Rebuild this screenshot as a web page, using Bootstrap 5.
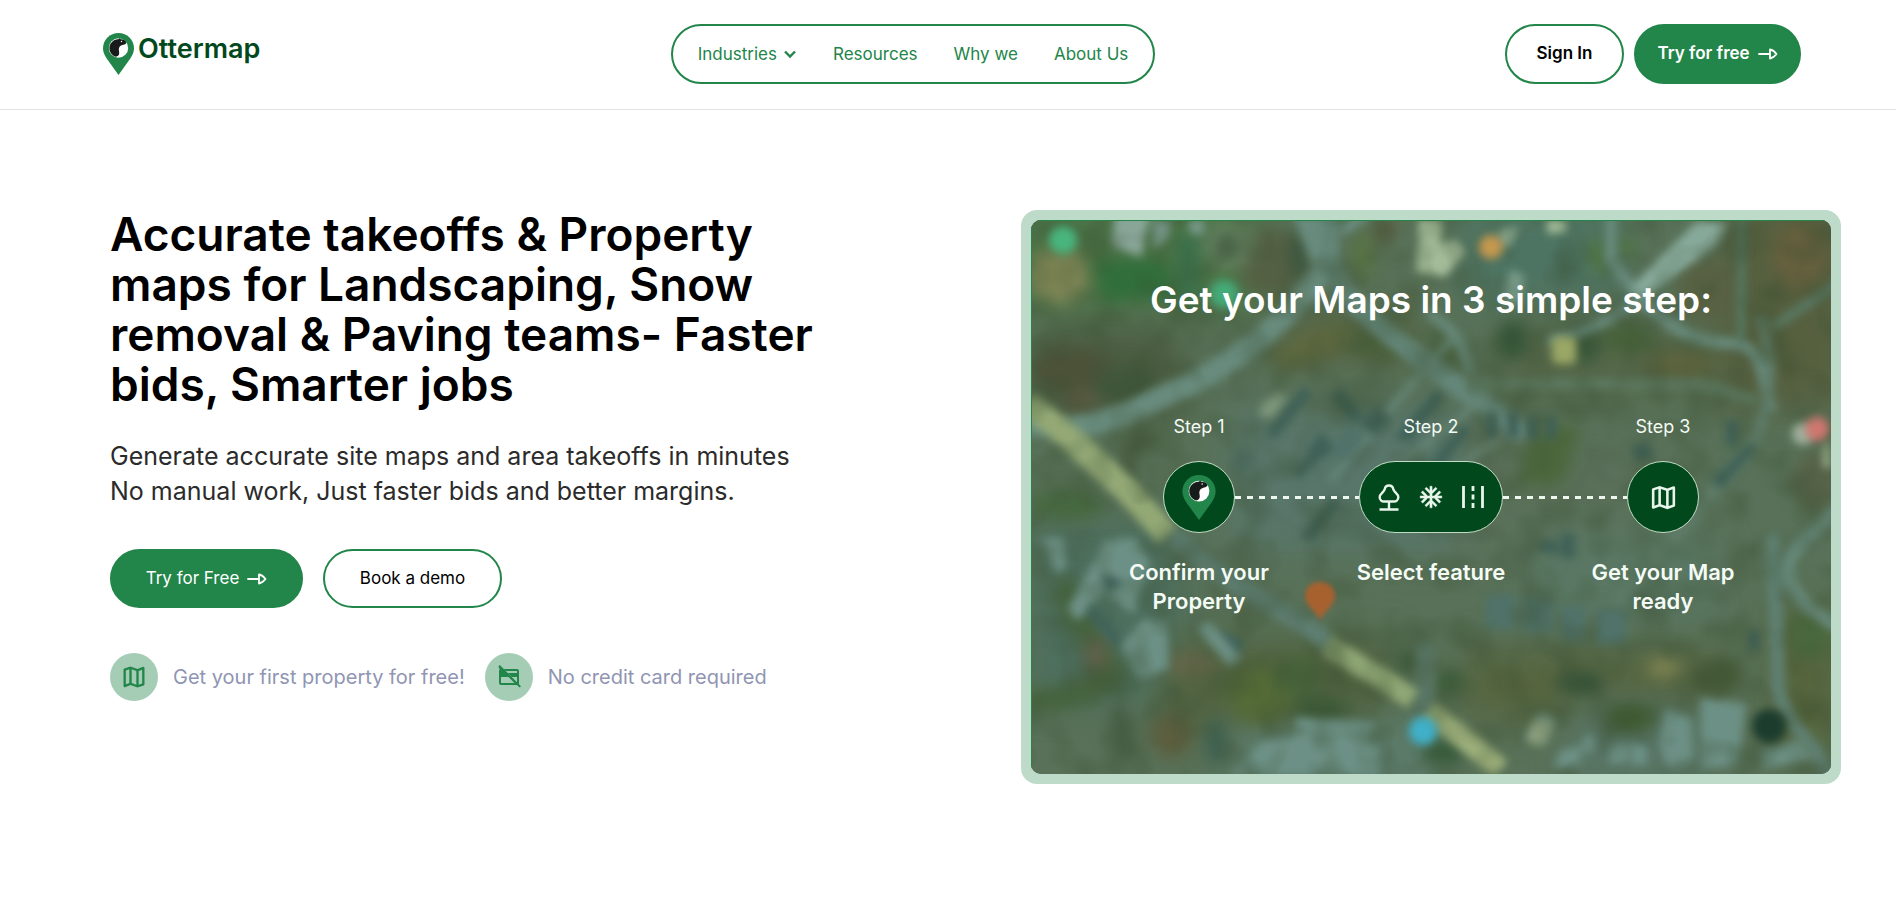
<!DOCTYPE html>
<html lang="en">
<head>
<meta charset="utf-8">
<meta name="viewport" content="width=device-width, initial-scale=1">
<title>Ottermap</title>
<link href="https://cdn.jsdelivr.net/npm/bootstrap@5.3.0/dist/css/bootstrap.min.css" rel="stylesheet">
<style>
  :root { --green: #22854a; --forest: #02481d; --mint: #a5cdb6; }
  body { font-family: Inter, "Open Sans", sans-serif; font-size: 17px; line-height: 24px; color: #000; background: #fff; }
  .site-header { border-bottom: 1px solid #e3e3e3; padding: 24px 95px 25px 103px; }
  .brand { width: 218px; color: var(--forest); font-size: 27px; line-height: 32px; font-weight: 600; }
  .brand:hover { color: var(--forest); }
  .brand span { padding-bottom: 10px; }
  .menu-pill { height: 60px; border: 2px solid var(--green); border-radius: 30px; padding: 0 25px; gap: 36px; }
  .menu-pill a { color: var(--green); text-decoration: none; }
  .menu-pill a:first-child { gap: 6px; }
  .pill { height: 60px; border: 2px solid var(--green); border-radius: 30px; display: inline-flex; align-items: center; justify-content: center; gap: 8px; padding: 0 20px; font-size: 17px; white-space: nowrap; }
  .pill-fill, .pill-fill:hover { background: var(--green); color: #fff; }
  .pill-line, .pill-line:hover { background: #fff; color: #000; border-color: var(--green); }
  .w-sign { width: 119px; } .w-try { width: 167px; } .w-free { width: 193px; } .w-demo { width: 179px; }
  .actions { gap: 10px; }
  .hero-copy { padding: 99px 60px 60px 110px; }
  .hero-copy h1 { font-size: 46px; line-height: 50px; font-weight: 600; margin: 0 0 30px; max-width: 740px; }
  .hero-copy .intro { font-size: 25px; line-height: 35px; color: #2b2b2b; margin: 0 0 40px; }
  .hero-copy .pill { height: 59px; }
  .cta-row, .perk-row { gap: 20px; }
  .perk-row { margin-top: 45px; }
  .perk { font-size: 20px; color: #8f95b2; gap: 15px; }
  .perk-icon { width: 48px; height: 48px; border-radius: 50%; background: var(--mint); color: var(--green); flex: none; }
  .hero-visual { padding: 100px 55px 60px 73px; }
  .map-card { border: 10px solid #bedbca; border-radius: 16px; color: #f4fbf5; background: #bedbca; }
  .map-inner { border-radius: 10px; overflow: hidden; min-height: 554px; padding: 56px 52px; background: #566f55; }
  .map-bg { position: absolute; inset: 0; width: 100%; height: 100%; }
  .map-card h2 { font-size: 37px; line-height: 48px; font-weight: 600; margin: 0; color: #fff; }
  .steps-grid { display: grid; grid-template-columns: repeat(3, 232px); justify-content: center; text-align: center; }
  .step-no { font-size: 18px; line-height: 24px; margin-top: 91px; }
  .step-name { font-size: 22px; line-height: 29px; font-weight: 600; margin-top: 25px; }
  .step-name span { max-width: 160px; margin: 0 auto; }
  .flow { width: 536px; margin: 22px auto 0; }
  .node { height: 72px; min-width: 72px; border: 1px solid #c3dcc6; border-radius: 36px; background: var(--forest); color: #e8f5ea; flex: none; }
  .node-wide { width: 144px; gap: 18px; }
  .dash { height: 3px; flex: 1; background: repeating-linear-gradient(90deg, #edf7ef 0 6px, transparent 6px 12px); }
</style>
</head>
<body>
<svg width="0" height="0" class="position-absolute" aria-hidden="true">
  <symbol id="pin" viewBox="0 0 31 42">
    <path fill="#22854a" d="M15.500 0C6.900 0 0 6.800 0 15.200c0 3.700 1.500 7 3.700 10.400L15.500 42l11.800-16.400C29.500 22.200 31 18.900 31 15.200 31 6.800 24.100 0 15.500 0z"/>
    <circle cx="15.500" cy="15" r="9.700" fill="#fff"/>
    <path fill="#171b1a" d="M8.200 20.500C5.300 16.500 6 11 9.800 8.200c2-1.500 4-2.200 5.600-1.900l1-1 1.300.9c2.600.1 4.400.9 5.300 2.500.5 1.300-.2 2.500-1.700 2.700-2.500.3-4.600 1.400-5.300 3.500-.6 1.800.4 3.700.2 5.600-.2 1.700-1.500 3-3.300 3.200-1.800-.5-3.700-1.700-4.700-3.200z"/>
    <circle cx="18.500" cy="8.500" r=".7" fill="#fff"/>
  </symbol>
  <symbol id="arrow" viewBox="0 0 20 12">
    <path d="M1 6h10.500M12 1.500v9M12 1.500c3 .5 5 2.500 6.500 4.500-1.500 2-3.500 4-6.500 4.500" fill="none" stroke="currentColor" stroke-width="1.800" stroke-linecap="round" stroke-linejoin="round"/>
  </symbol>
  <symbol id="map" viewBox="0 0 24 24">
    <path fill="currentColor" fill-rule="evenodd" d="M15 21l-6-2.100-4.650 1.800q-.5.200-.925-.112T3 19.750v-14q0-.325.188-.575T3.700 4.800L9 3l6 2.100 4.650-1.800q.5-.2.925.112T21 4.250v14q0 .325-.188.575t-.512.375L15 21zm-1-2.450V6.850l-4-1.400v11.700l4 1.400zm2 0l3-1V5.700l-3 1.150v11.700zM5 18.300l3-1.150V5.450l-3 1V18.300z"/>
  </symbol>
  <symbol id="card-off" viewBox="0 0 24 24">
    <path fill="currentColor" d="M7 4H20c1.100 0 2 .9 2 2v12c0 .5-.2 1-.5 1.300L20 17.800V12h-5L11 8h9V6H9zM1.400 1.400L2.800 0 24 21.200l-1.400 1.400-2.700-2.700H4c-1.100 0-2-.9-2-2V6c0-.7.300-1.200.7-1.600zM4 12v6h13.500l-6-6z"/>
  </symbol>
</svg>

<header class="site-header d-flex justify-content-between align-items-center">
  <a href="#" class="brand d-flex align-items-center text-decoration-none">
    <svg width="31" height="42" class="me-1" aria-hidden="true"><use href="#pin"/></svg>
    <span>Ottermap</span>
  </a>
  <nav class="menu-pill d-flex align-items-center">
    <a href="#" class="d-flex align-items-center">Industries
      <svg width="14" height="10" viewBox="0 0 14 10" aria-hidden="true"><path d="M2 2.500l5 5 5-5" fill="none" stroke="currentColor" stroke-width="2.400"/></svg>
    </a>
    <a href="#">Resources</a>
    <a href="#">Why we</a>
    <a href="#">About Us</a>
  </nav>
  <div class="actions d-flex">
    <button type="button" class="btn pill pill-line w-sign fw-semibold">Sign In</button>
    <button type="button" class="btn pill pill-fill w-try fw-semibold">Try for free <svg width="20" height="12" aria-hidden="true"><use href="#arrow"/></svg></button>
  </div>
</header>

<main class="row g-0">
  <section class="col-12 col-lg-6 hero-copy">
    <h1>Accurate takeoffs &amp; Property maps for Landscaping, Snow removal &amp; Paving teams- Faster bids, Smarter jobs</h1>
    <p class="intro">Generate accurate site maps and area takeoffs in minutes<br>No manual work, Just faster bids and better margins.</p>
    <div class="cta-row d-flex">
      <button type="button" class="btn pill pill-fill w-free">Try for Free <svg width="20" height="12" aria-hidden="true"><use href="#arrow"/></svg></button>
      <button type="button" class="btn pill pill-line w-demo">Book a demo</button>
    </div>
    <div class="perk-row d-flex flex-wrap">
      <div class="perk d-flex align-items-center">
        <span class="perk-icon d-flex align-items-center justify-content-center"><svg width="28" height="28" aria-hidden="true"><use href="#map"/></svg></span>
        <span>Get your first property for free!</span>
      </div>
      <div class="perk d-flex align-items-center">
        <span class="perk-icon d-flex align-items-center justify-content-center"><svg width="24" height="24" aria-hidden="true"><use href="#card-off"/></svg></span>
        <span>No credit card required</span>
      </div>
    </div>
  </section>

  <section class="col-12 col-lg-6 hero-visual">
    <div class="map-card">
      <div class="map-inner position-relative">
        <svg class="map-bg" viewBox="0 0 800 554" preserveAspectRatio="none" aria-hidden="true">
          <defs>
            <filter id="b3" x="-5%" y="-5%" width="110%" height="110%" color-interpolation-filters="sRGB"><feGaussianBlur stdDeviation="4"/></filter>
            <filter id="b6" x="-5%" y="-5%" width="110%" height="110%" color-interpolation-filters="sRGB"><feGaussianBlur stdDeviation="8"/></filter>
            <filter id="b16" x="-10%" y="-10%" width="120%" height="120%" color-interpolation-filters="sRGB"><feGaussianBlur stdDeviation="18"/></filter>
            <filter id="grain" x="0" y="0" width="100%" height="100%" color-interpolation-filters="sRGB">
              <feTurbulence type="fractalNoise" baseFrequency="0.025" numOctaves="2" seed="8"/>
              <feColorMatrix values="0 0 0 0 .22  0 0 0 0 .3  0 0 0 0 .18  .9 0 0 0 -.36"/>
            </filter>
          </defs>
          <rect width="800" height="554" fill="#587158"/>
          <!-- broad ground tones -->
          <g filter="url(#b16)">
            <rect x="-20" y="-20" width="250" height="110" fill="#4c7548"/>
            <rect x="0" y="110" width="150" height="85" fill="#4b5c40"/>
            <rect x="240" y="90" width="150" height="50" fill="#566645"/>
            <rect x="430" y="-10" width="160" height="90" fill="#4d7463"/>
            <rect x="690" y="-20" width="130" height="210" fill="#56603f"/>
            <rect x="470" y="110" width="220" height="60" fill="#556748"/>
            <rect x="200" y="190" width="240" height="140" fill="#58766a"/>
            <rect x="430" y="210" width="190" height="120" fill="#5a7059"/>
            <rect x="500" y="310" width="180" height="90" fill="#597763"/>
            <rect x="0" y="300" width="150" height="180" fill="#4d6f5e"/>
            <rect x="130" y="420" width="230" height="100" fill="#526441"/>
            <rect x="430" y="430" width="260" height="70" fill="#56653f"/>
            <rect x="200" y="500" width="200" height="70" fill="#5c7c6c"/>
            <rect x="540" y="480" width="140" height="80" fill="#587566"/>
            <rect x="740" y="390" width="70" height="140" fill="#56653c"/>
          </g>
          <!-- woods, fields and clearings -->
          <g filter="url(#b6)">
            <path fill="#306e3b" d="M60 40h75l8 35-70 8z"/>
            <ellipse cx="28" cy="55" rx="31" ry="29" fill="#7d8454"/>
            <ellipse cx="240" cy="42" rx="34" ry="34" fill="#546043"/>
            <ellipse cx="268" cy="35" rx="10" ry="24" fill="#3c563f"/>
            <ellipse cx="198" cy="25" rx="26" ry="24" fill="#64805f"/>
            <ellipse cx="196" cy="26" rx="11" ry="10" fill="#3e5b40"/>
            <rect x="146" y="15" width="22" height="70" fill="#39704a"/>
            <ellipse cx="40" cy="150" rx="42" ry="22" fill="#4b5238"/>
            <ellipse cx="95" cy="165" rx="32" ry="20" fill="#41583c"/>
            <ellipse cx="50" cy="182" rx="16" ry="12" fill="#5c5a42"/>
            <path fill="#5f693f" d="M235 135l60-30 30 5-20 25-50 15z"/>
            <ellipse cx="350" cy="125" rx="38" ry="15" fill="#4b613c"/>
            <ellipse cx="332" cy="35" rx="12" ry="26" fill="#587244"/>
            <path fill="#5b5b3d" d="M345 0h25l-20 30z"/>
            <ellipse cx="481" cy="120" rx="15" ry="20" fill="#345538"/>
            <ellipse cx="555" cy="125" rx="14" ry="20" fill="#39583a"/>
            <ellipse cx="597" cy="118" rx="26" ry="15" fill="#466139"/>
            <path fill="#50743f" d="M555 20l18 0 5 30-16 5zM580 20h28l-10 22z"/>
            <ellipse cx="680" cy="70" rx="35" ry="32" fill="#586143"/>
            <ellipse cx="770" cy="35" rx="28" ry="34" fill="#67603e"/>
            <ellipse cx="650" cy="145" rx="34" ry="15" fill="#60653f"/>
            <path fill="#48623d" d="M395 110l30 12 12 28-30-10z"/>
            <path fill="none" d="M118 210c-24 20-32 55-4 80" stroke="#45583c" stroke-width="16"/>
            <ellipse cx="35" cy="285" rx="38" ry="16" fill="#46683f"/>
            <path d="M40 360c-15 25 20 55 42 90-10 20-50 35-90 30" fill="none" stroke="#47653f" stroke-width="24"/>
            <ellipse cx="65" cy="435" rx="12" ry="18" fill="#64624a"/>
            <ellipse cx="160" cy="445" rx="24" ry="12" fill="#66674a"/>
            <ellipse cx="230" cy="475" rx="32" ry="30" fill="#546b37"/>
            <ellipse cx="268" cy="456" rx="24" ry="20" fill="#46623a"/>
            <ellipse cx="290" cy="490" rx="28" ry="14" fill="#3c5a37"/>
            <ellipse cx="140" cy="515" rx="20" ry="22" fill="#5f5f3f"/>
            <ellipse cx="88" cy="515" rx="11" ry="32" fill="#476147"/>
            <ellipse cx="185" cy="522" rx="10" ry="24" fill="#3d6153"/>
            <ellipse cx="378" cy="442" rx="14" ry="14" fill="#3d5a3a"/>
            <ellipse cx="417" cy="462" rx="14" ry="13" fill="#395a36"/>
            <ellipse cx="550" cy="463" rx="25" ry="12" fill="#355238"/>
            <ellipse cx="690" cy="455" rx="24" ry="16" fill="#455b38"/>
            <ellipse cx="600" cy="498" rx="26" ry="14" fill="#3f5d31"/>
            <ellipse cx="632" cy="448" rx="16" ry="9" fill="#828651"/>
            <ellipse cx="412" cy="532" rx="20" ry="13" fill="#375d3c"/>
            <ellipse cx="780" cy="415" rx="20" ry="24" fill="#4a6a3e"/>
            <ellipse cx="785" cy="260" rx="22" ry="30" fill="#576348"/>
            <path fill="#4c673c" d="M500 205h50l-18 60-46 0z"/>
          </g>
          <!-- roads and water -->
          <g filter="url(#b3)" fill="none" stroke="#688b7d" stroke-linecap="round">
            <path d="M0 205c60 8 90-8 130-28C200 150 250 105 290 55c10-15-10-30-18-70" stroke-width="22"/>
            <path d="M298 0v45c20 45 75 80 120 115 30 25 50 30 70 50" stroke-width="20" stroke="#64877a"/>
            <path d="M315 8L345-15" stroke-width="12"/>
            <path d="M400 95c25 15 30 25 38 52" stroke-width="9"/>
            <path d="M580 0v40l35 45c30 25 40 35 80 38 40 0 35 35 45 65" stroke-width="11"/>
            <path d="M520 120c40-10 60-20 90-42l45-50" stroke-width="9"/>
            <path d="M710 0v120" stroke-width="9" stroke="#54765f"/>
            <path d="M745 105l60-40" stroke-width="9" stroke="#597964"/>
            <path d="M440 165h230l50 15" stroke-width="12" stroke="#5b785f"/>
            <path d="M730 100c20 60 5 110-25 145l-120 140" stroke-width="11" stroke="#5f7c69"/>
            <path d="M800 295c-40 40-50 40-40 70 15 25 30 30 45 40" stroke-width="13"/>
            <path d="M742 320l5 150c10 40 40 55 50 85" stroke-width="14" stroke="#5f8072"/>
            <path d="M140 315c60 55 120 75 160 110" stroke-width="18" stroke="#5e7e72"/>
            <path d="M394 430v75" stroke-width="18" stroke="#587564"/>
            <path d="M300 260l45-55 75-85" stroke-width="5"/>
            <path d="M340 265l120-90M375 285l90-65" stroke-width="5" stroke="#6a8b7b"/>
            <g stroke-linecap="butt">
              <path d="M-5 183c35 25 60 50 98 85l44 47" stroke="#93a875" stroke-width="25"/>
              <path d="M296 425l86 54" stroke="#8fa775" stroke-width="21"/>
              <path d="M398 491l72 58" stroke="#9caf7a" stroke-width="21"/>
            </g>
          </g>
          <!-- buildings and parked vehicles -->
          <g filter="url(#b3)">
            <path fill="#88a598" d="M85-8h35l-10 45-30-12z"/>
            <path fill="#79998d" d="M122 0h18l-4 20-14 8zM158 0h15v14h-14z"/>
            <path fill="#a3bb98" d="M388 0h24l-4 30h-20zM386 30l38-10 10 12-20 25-28-5zM515 0h20v12l-18 2z"/>
            <path fill="#86a48c" d="M470 8h18l-8 18h-14z"/>
            <path fill="#87a99a" d="M665 2h34l-12 22-74 52-14-8z"/>
            <path fill="#7b9e8d" d="M478 50l16 6-6 28-16-4z"/>
            <path fill="#7b9579" d="M230 185l18-14 8 8-14 20-14-2z"/>
            <g fill="#3f6157">
              <path d="M235 212l38-46 8 8-38 46zM262 252l18-20 6 8-18 20zM298 175l14-6 22 28-12 8zM330 205l16-20 14 14-16 18zM364 218l40-48 10 6-36 46zM390 255l40-50 10 4-36 48zM276 230l14-18 14 16-16 14z"/>
              <path d="M455 192h12v26h-12zM476 192h12v26h-12zM496 196h11v24h-11zM515 196h10v24h-10zM695 200h12v26h-12zM600 228l16-6 8 14-18 6zM530 314h14v24h-14zM270 315l32-38 8 6-30 40z"/>
              <path d="M680 260l40-38 6 6-36 42zM508 320l20 2v12l-20-2z"/>
            </g>
            <g fill="#507269">
              <path d="M455 375h30v34h-30zM492 378h30v34h-30zM530 386h24v34h-24zM565 390h30v34h-30z"/>
              <path d="M300 230l20-25 14 12-20 26zM200 238l12-12 12 16-12 14z"/>
            </g>
            <g fill="#6c9085">
              <path d="M75 320l28-2 16 24-16 52-30-22-26 30-10-14zM112 400h24l2 48-30 12-18-34zM12 318h20l4 30-12 6zM165 408l14-6 32 36-12 8z"/>
              <path d="M230 522l60-12 60 18v28H200zM265 498l80 4-10 20-70-14z"/>
              <path d="M508 492l20 8-14 26-22-6zM550 515h14v18h-14zM530 530l20-4v20h-28zM578 525h18v18h-18zM600 525h16v20h-16zM636 488l24 12 2 38-26 8-8-20zM670 478l45 6-8 60-38 6zM728 530l40-10 12 20-50 8z"/>
            </g>
            <path fill="#3f635c" d="M70 352l24 10-18 12zM58 382l28 30 4 18-34-36zM186 408l20 26 8-12zM718 410h10v20h-10z"/>
            <path fill="#95aa88" d="M502 498l22 4-12 24-16-4zM792 226l8-8v30h-8z"/>
          </g>
          <rect width="800" height="554" filter="url(#grain)"/>
          <!-- location markers -->
          <g filter="url(#b3)">
            <circle cx="32" cy="20" r="14" fill="#49b57e"/>
            <circle cx="193" cy="74" r="14" fill="#44ab78"/>
            <circle cx="460" cy="27" r="12" fill="#c5984e"/>
            <rect x="521" y="117" width="24" height="27" rx="5" fill="#9aa765"/>
            <circle cx="772" cy="214" r="11" fill="#9db19d"/>
            <circle cx="786" cy="209" r="12" fill="#cf7770"/>
            <circle cx="392" cy="511" r="14" fill="#3fb0c9"/>
            <circle cx="738" cy="506" r="17" fill="#1c3c2e"/>
          </g>
          <path fill="#b0602c" opacity=".9" d="M289 362c9 0 15 6 15 14 0 10-10 14-15 24-4-9-15-14-15-24 0-8 6-14 15-14z" style="filter:blur(2px)"/>
          <path d="M0 554V0h800" fill="none" stroke="#25854a" stroke-width="2"/>
        </svg>
        <div class="position-relative">
          <h2 class="text-center">Get your Maps in 3 simple step:</h2>
          <div class="steps-grid step-no"><span>Step 1</span><span>Step 2</span><span>Step 3</span></div>
          <div class="flow d-flex align-items-center">
            <div class="node d-flex align-items-center justify-content-center"><svg width="34" height="45" aria-hidden="true"><use href="#pin"/></svg></div>
            <div class="dash"></div>
            <div class="node node-wide d-flex align-items-center justify-content-center" aria-hidden="true">
              <svg width="22" height="27" viewBox="0 0 22 27" fill="none" stroke="currentColor" stroke-width="2.400"><path d="M11 1.500c-2.500 0-4 1.500-4.300 3.800C6 8.300 1.700 9.500 1.700 13.200c0 2.600 2 4.300 4.300 4.300h10c2.300 0 4.300-1.700 4.300-4.300 0-3.700-4.300-4.900-5-7.900C15 3 13.500 1.500 11 1.500zM11 17.500V25M1.500 25.500h19" stroke-linejoin="round"/></svg>
              <svg width="26" height="26" viewBox="0 0 24 24"><path fill="currentColor" d="M22 11h-4.170l3.240-3.240-1.410-1.420L15 11h-2V9l4.660-4.660-1.420-1.410L13 6.170V2h-2v4.170L7.760 2.930 6.340 4.340 11 9v2H9L4.340 6.340 2.930 7.760 6.170 11H2v2h4.170l-3.240 3.240 1.410 1.420L9 13h2v2l-4.660 4.660 1.420 1.410L11 17.830V22h2v-4.170l3.240 3.240 1.420-1.410L13 15v-2h2l4.660 4.660 1.410-1.420L17.830 13H22z" stroke="currentColor" stroke-width=".4"/></svg>
              <svg width="22" height="22" viewBox="0 0 22 22" fill="none" stroke="currentColor" stroke-width="2.800"><path d="M1.500 0v22M20.500 0v22M11 0v5M11 8.500v5M11 17v5"/></svg>
            </div>
            <div class="dash"></div>
            <div class="node d-flex align-items-center justify-content-center"><svg width="31" height="31" aria-hidden="true"><use href="#map"/></svg></div>
          </div>
          <div class="steps-grid step-name"><span>Confirm your Property</span><span>Select feature</span><span>Get your Map ready</span></div>
        </div>
      </div>
    </div>
  </section>
</main>
<script src="https://cdn.jsdelivr.net/npm/bootstrap@5.3.0/dist/js/bootstrap.bundle.min.js"></script>
</body>
</html>
